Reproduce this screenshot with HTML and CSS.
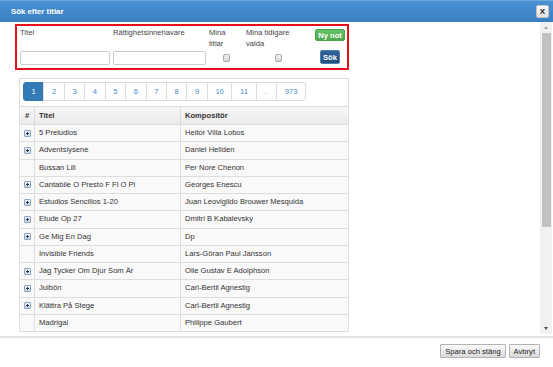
FILE: index.html
```html
<!DOCTYPE html>
<html lang="sv">
<head>
  <meta charset="UTF-8">
  <meta name="viewport" content="width=device-width, initial-scale=1.0">
  <title>Sök efter titlar</title>
  <link rel="stylesheet" href="styles.css">
</head>
<body>
  <div class="dialog">
    <header class="titlebar">
      <span class="caption">Sök efter titlar</span>
      <button class="close">X</button>
    </header>

    <div class="body">
      <div class="content">
        <div class="search">
          <label class="lbl">Titel</label>
          <label class="lbl">Rättighetsinnehavare</label>
          <label class="lbl">Mina<br>titlar</label>
          <label class="lbl">Mina tidigare<br>valda</label>
          <div class="cell-btn"><button class="btn btn-green">Ny not</button></div>
          <input type="text" class="field">
          <input type="text" class="field">
          <div class="check"><input type="checkbox"></div>
          <div class="check"><input type="checkbox"></div>
          <div class="cell-btn"><button class="btn btn-navy">Sök</button></div>
        </div>

        <div class="panel">
          <ul class="pager">
            <li class="active"><a>1</a></li>
            <li><a>2</a></li>
            <li><a>3</a></li>
            <li><a>4</a></li>
            <li><a>5</a></li>
            <li><a>6</a></li>
            <li><a>7</a></li>
            <li><a>8</a></li>
            <li><a>9</a></li>
            <li><a>10</a></li>
            <li><a>11</a></li>
            <li class="gap"><a>...</a></li>
            <li><a>973</a></li>
          </ul>

          <table class="titles">
            <colgroup>
              <col class="c-idx">
              <col class="c-title">
              <col>
            </colgroup>
            <thead>
              <tr><th class="idx">#</th><th>Titel</th><th>Kompositör</th></tr>
            </thead>
            <tbody>
              <tr><td class="idx"><span class="expand"></span></td><td>5 Preludios</td><td>Heitor Villa Lobos</td></tr>
              <tr><td class="idx"><span class="expand"></span></td><td>Adventslysene</td><td>Daniel Hellden</td></tr>
              <tr><td class="idx"></td><td>Bussan Lill</td><td>Per Nore Chenon</td></tr>
              <tr><td class="idx"><span class="expand"></span></td><td>Cantabile O Presto F Fl O Pi</td><td>Georges Enescu</td></tr>
              <tr><td class="idx"><span class="expand"></span></td><td>Estudios Sencillos 1-20</td><td>Juan Leovigildo Brouwer Mesquida</td></tr>
              <tr><td class="idx"><span class="expand"></span></td><td>Etude Op 27</td><td>Dmitri B Kabalevsky</td></tr>
              <tr><td class="idx"><span class="expand"></span></td><td>Ge Mig En Dag</td><td>Dp</td></tr>
              <tr><td class="idx"></td><td>Invisible Friends</td><td>Lars-Göran Paul Jansson</td></tr>
              <tr><td class="idx"><span class="expand"></span></td><td>Jag Tycker Om Djur Som Är</td><td>Olle Gustav E Adolphson</td></tr>
              <tr><td class="idx"><span class="expand"></span></td><td>Julbön</td><td>Carl-Bertil Agnestig</td></tr>
              <tr><td class="idx"><span class="expand"></span></td><td>Klättra På Stege</td><td>Carl-Bertil Agnestig</td></tr>
              <tr><td class="idx"></td><td>Madrigal</td><td>Philippe Gaubert</td></tr>
            </tbody>
          </table>
        </div>
      </div>

      <div class="scrollbar">
        <span class="arrow up"></span>
        <span class="thumb"></span>
        <span class="arrow down"></span>
      </div>
    </div>

    <footer class="footer">
      <button class="fbtn">Spara och stäng</button>
      <button class="fbtn">Avbryt</button>
    </footer>
  </div>
</body>
</html>
```

FILE: styles.css
```css
body {
  margin: 0;
  font-family: "Liberation Sans", Arial, sans-serif;
  font-size: 7.6px;
  color: #333;
  background: #fff;
}
.dialog {
  width: 553px;
  height: 367px;
  display: flex;
  flex-direction: column;
  overflow: hidden;
}

/* title bar */
.titlebar {
  flex: none;
  height: 22px;
  box-sizing: border-box;
  display: flex;
  align-items: center;
  justify-content: space-between;
  padding: 0 4px 0 11px;
  border-top: 1px solid #6ea9dd;
  background: linear-gradient(#4a92d3, #3a7fc2);
}
.caption {
  color: #fff;
  font-weight: bold;
  font-size: 7.8px;
}
.close {
  width: 13px;
  height: 13px;
  padding: 0;
  border: 1px solid #c4c4c4;
  border-radius: 2px;
  background: linear-gradient(#fbfbfb, #e0e0e0);
  font: bold 8px "Liberation Sans", Arial, sans-serif;
  color: #222;
}

/* body + fake scrollbar */
.body {
  flex: none;
  height: 314px;
  display: flex;
  overflow: hidden;
}
.content {
  flex: 1;
  overflow: hidden;
}
.scrollbar {
  width: 12px;
  height: 312px;
  margin-right: 1px;
  background: #f1f1f1;
  display: flex;
  flex-direction: column;
  align-items: center;
}
.arrow {
  width: 0;
  height: 0;
  border-left: 2.5px solid transparent;
  border-right: 2.5px solid transparent;
}
.arrow.up {
  margin-top: 4px;
  border-bottom: 3px solid #a3a3a3;
}
.arrow.down {
  margin-top: auto;
  margin-bottom: 4px;
  border-top: 3px solid #505050;
}
.thumb {
  width: 9px;
  height: 194px;
  margin-top: 4px;
  background: #c1c1c1;
}

/* search form */
.search {
  width: 334px;
  box-sizing: border-box;
  margin: 2px 0 0 15px;
  padding: 1px 0 3px 3px;
  border: 2px solid #e3121a;
  display: grid;
  grid-template-columns: 90px 93px 34px 64px 1fr;
  grid-template-rows: 22px 14px;
  column-gap: 3px;
  row-gap: 2px;
}
.lbl {
  line-height: 10.5px;
  padding-top: 1px;
  color: #444;
}
.cell-btn {
  display: flex;
  justify-content: center;
  align-items: flex-start;
}
.btn {
  font: bold 7.6px "Liberation Sans", Arial, sans-serif;
  color: #fff;
  border-radius: 2px;
  padding: 0 2px;
}
.btn-green {
  height: 12px;
  margin-top: 2px;
  border: 1px solid #4aa14a;
  background: linear-gradient(#62c462, #4fa84f);
}
.btn-navy {
  height: 14px;
  margin-top: -1px;
  padding: 0 2px;
  border: 1px solid #4d7fb3;
  background: linear-gradient(#2f6399, #234f7f);
}
.field {
  height: 14px;
  box-sizing: border-box;
  margin: 0;
  border: 1px solid #ccc;
  border-radius: 2px;
  background: #fff;
}
.check {
  display: flex;
  justify-content: center;
  align-items: center;
}
.check input {
  appearance: none;
  width: 7px;
  height: 8px;
  margin: 0;
  border: 1px solid #a8a8a8;
  border-radius: 2px;
  background: linear-gradient(#f2f2f2, #d8d8d8);
}

/* results panel */
.panel {
  width: 330px;
  box-sizing: border-box;
  margin: 8px 0 0 19px;
  border: 1px solid #ddd;
}
.pager {
  list-style: none;
  margin: 0;
  padding: 3px 3px 5px;
  display: flex;
}
.pager li a {
  display: block;
  height: 19px;
  box-sizing: border-box;
  line-height: 17px;
  padding: 0 7.6px;
  margin-left: -1px;
  border: 1px solid #ddd;
  color: #428bca;
  background: #fff;
}
.pager li:first-child a {
  margin-left: 0;
  border-radius: 3px 0 0 3px;
}
.pager li:last-child a {
  border-radius: 0 3px 3px 0;
  padding: 0 7.9px;
}
.pager li.active a {
  color: #fff;
  background: #337ab7;
  border-color: #337ab7;
}
.pager li.gap a {
  color: #bbb;
  padding: 0 6.5px;
}

.titles {
  width: 100%;
  border-collapse: separate;
  border-spacing: 0;
  table-layout: fixed;
}
.c-idx { width: 14px; }
.c-title { width: 146px; }
.titles th,
.titles td {
  padding: 0 4px;
  border-top: 1px solid #ddd;
  text-align: left;
  white-space: nowrap;
  overflow: hidden;
}
.titles th + th,
.titles td + td {
  border-left: 1px solid #ddd;
}
.titles th {
  line-height: 17px;
  font-weight: bold;
  background: linear-gradient(#f7f7f7, #ebebeb);
}
.titles td {
  line-height: 16.25px;
  background: #f9f9f9;
}
.titles .idx {
  padding: 0;
  text-align: center;
  vertical-align: middle;
}
.expand {
  display: block;
  width: 7px;
  height: 7px;
  margin: 0 auto;
  box-sizing: border-box;
  border: 1px solid #8ea4bf;
  border-radius: 1px;
  background:
    linear-gradient(#2d3a4a, #2d3a4a) center / 3px 1px no-repeat,
    linear-gradient(#2d3a4a, #2d3a4a) center / 1px 3px no-repeat,
    linear-gradient(#eef3f9, #c9d6e6);
}

/* footer */
.footer {
  flex: none;
  border-top: 2px solid #e2e2e2;
  padding: 6px 13px 0 0;
  display: flex;
  justify-content: flex-end;
  gap: 3px;
}
.fbtn {
  height: 14px;
  padding: 0 4px;
  border: 1px solid #b3b3b3;
  border-radius: 1px;
  background: linear-gradient(#fbfbfb, #dadada);
  font: 7.6px "Liberation Sans", Arial, sans-serif;
  color: #222;
}
```
